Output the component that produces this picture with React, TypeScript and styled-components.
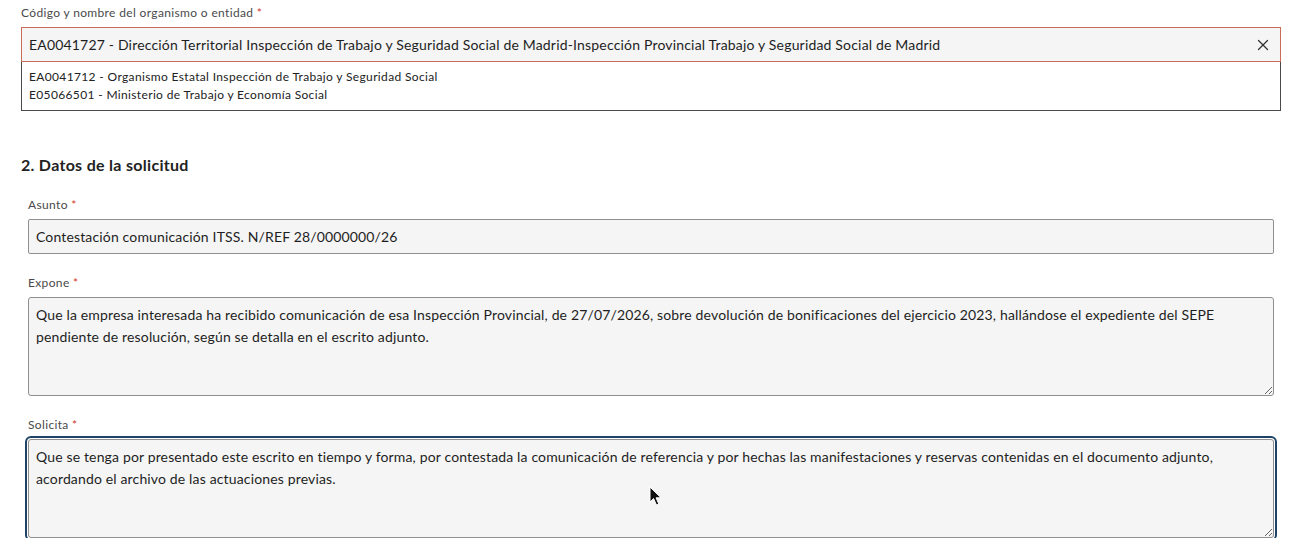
import React, { useEffect, useRef } from "react";
import styled, { createGlobalStyle } from "styled-components";
import { X } from "lucide-react";

const GlobalStyle = createGlobalStyle`
  body {
    margin: 0;
    background: #fff;
    font-family: "Lato", "Noto Sans", sans-serif;
    color: #222;
  }
`;

const options = [
  "EA0041712 - Organismo Estatal Inspección de Trabajo y Seguridad Social",
  "E05066501 - Ministerio de Trabajo y Economía Social",
];

const expone =
  "Que la empresa interesada ha recibido comunicación de esa Inspección Provincial, de 27/07/2026, sobre devolución de bonificaciones del ejercicio 2023, hallándose el expediente del SEPE pendiente de resolución, según se detalla en el escrito adjunto.";

const solicita =
  "Que se tenga por presentado este escrito en tiempo y forma, por contestada la comunicación de referencia y por hechas las manifestaciones y reservas contenidas en el documento adjunto, acordando el archivo de las actuaciones previas.";

function App() {
  const solicitaRef = useRef<HTMLTextAreaElement>(null);

  useEffect(() => {
    const el = solicitaRef.current;
    if (el) {
      el.focus();
      el.setSelectionRange(el.value.length, el.value.length);
    }
  }, []);

  return (
    <Page>
      <GlobalStyle />
      <Label>
        Código y nombre del organismo o entidad <Required>*</Required>
      </Label>
      <Combo>
        <ComboInput
          readOnly
          value="EA0041727 - Dirección Territorial Inspección de Trabajo y Seguridad Social de Madrid-Inspección Provincial Trabajo y Seguridad Social de Madrid"
        />
        <ClearBtn>
          <X size={18} strokeWidth={1.6} />
        </ClearBtn>
      </Combo>
      <Listbox>
        {options.map((o) => (
          <Option key={o}>{o}</Option>
        ))}
      </Listbox>

      <SectionTitle>2. Datos de la solicitud</SectionTitle>

      <Fields>
        <Field>
          <Label>
            Asunto <Required>*</Required>
          </Label>
          <TextInput
            readOnly
            value="Contestación comunicación ITSS. N/REF 28/0000000/26"
          />
        </Field>
        <Field>
          <Label>
            Expone <Required>*</Required>
          </Label>
          <TextArea defaultValue={expone} />
        </Field>
        <Field>
          <Label>
            Solicita <Required>*</Required>
          </Label>
          <AreaWrap>
            <TextArea ref={solicitaRef} defaultValue={solicita} $focused />
            <Pointer width="14" height="21" viewBox="0 0 14 21">
              <path
                d="M1 1 L1 16 L4.6 12.6 L7.4 19 L9.8 18 L7.1 11.8 L12 11.8 Z"
                fill="#111"
                stroke="#fff"
                strokeWidth="1"
              />
            </Pointer>
          </AreaWrap>
        </Field>
      </Fields>
    </Page>
  );
}

const Page = styled.div`
  padding: 5px 19px 0 21px;
  width: 1260px;
`;

const Label = styled.label`
  display: block;
  font-size: 12px;
  line-height: 16px;
  letter-spacing: 0.35px;
  color: #4a4a4a;
  margin-bottom: 6px;
`;

const Required = styled.span`
  color: #d0392b;
`;

const Combo = styled.div`
  display: flex;
  align-items: center;
  height: 35px;
  box-sizing: border-box;
  border: 1px solid #cc6a58;
  background: #f5f5f5;
`;

const ComboInput = styled.input`
  flex: 1;
  border: none;
  outline: none;
  background: transparent;
  font-family: inherit;
  font-size: 14px;
  letter-spacing: 0.18px;
  color: #1e1e1e;
  padding: 0 7px;
  height: 100%;
`;

const ClearBtn = styled.span`
  display: flex;
  align-items: center;
  justify-content: center;
  width: 34px;
  color: #333;
`;

const Listbox = styled.ul`
  list-style: none;
  margin: 0;
  padding: 6px 7px 6px;
  border: 1px solid #4a4a4a;
  border-top: none;
  background: #fff;
`;

const Option = styled.li`
  font-size: 12px;
  line-height: 18px;
  letter-spacing: 0.35px;
  color: #222;
`;

const SectionTitle = styled.h2`
  margin: 44px 0 0;
  font-size: 16px;
  line-height: 20px;
  letter-spacing: 0.3px;
  font-weight: 700;
  color: #222;
`;

const Fields = styled.div`
  display: flex;
  flex-direction: column;
  gap: 21px;
  padding: 22px 7px 0 7px;
`;

const Field = styled.div`
  display: flex;
  flex-direction: column;
`;

const TextInput = styled.input`
  box-sizing: border-box;
  height: 35px;
  border: 1px solid #8f8f8f;
  border-radius: 2px;
  background: #f5f5f5;
  font-family: inherit;
  font-size: 14px;
  letter-spacing: 0.15px;
  color: #1e1e1e;
  padding: 0 7px;
  outline: none;
`;

const TextArea = styled.textarea<{ $focused?: boolean }>`
  display: block;
  box-sizing: border-box;
  width: 100%;
  height: 99px;
  border: 1px solid #8f8f8f;
  border-radius: 3px;
  background: #f5f5f5;
  font-family: inherit;
  font-size: 14px;
  line-height: 22px;
  letter-spacing: 0.15px;
  color: #1e1e1e;
  padding: 6px 7px;
  resize: vertical;
  outline: ${(p) => (p.$focused ? "2px solid #1d4466" : "none")};
  outline-offset: 1px;
  &:focus {
    outline: 2px solid #1d4466;
  }
`;

const AreaWrap = styled.div`
  position: relative;
`;

const Pointer = styled.svg`
  position: absolute;
  left: 621px;
  top: 47px;
  pointer-events: none;
`;

export default App;
